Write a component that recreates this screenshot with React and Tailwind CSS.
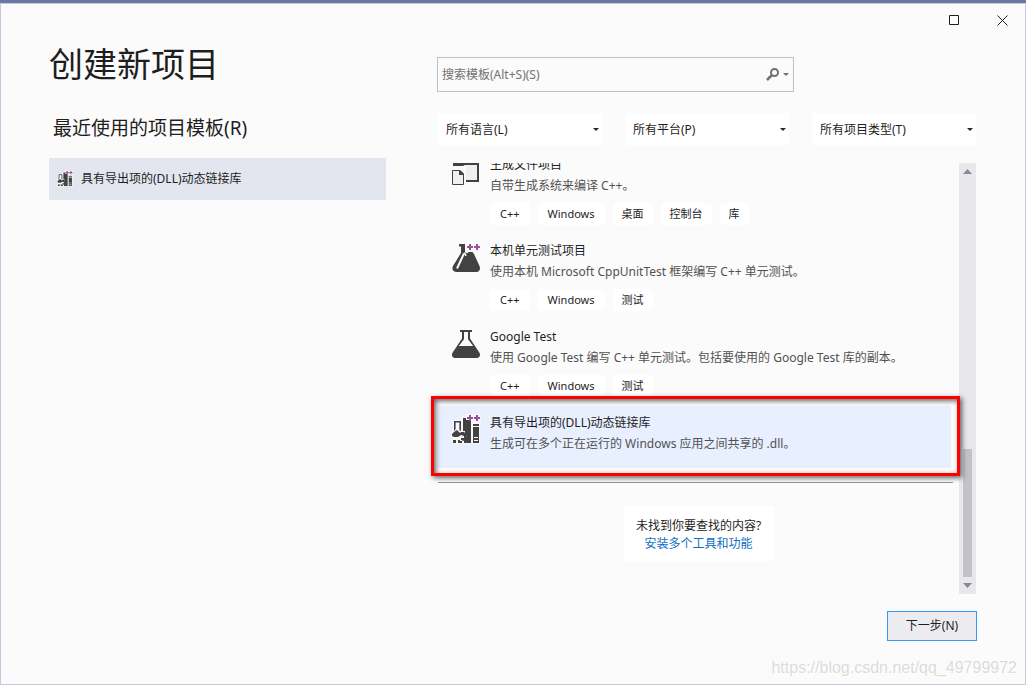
import { useState } from 'react'

const FILTERS = [
  { id: 'language', label: '所有语言(L)' },
  { id: 'platform', label: '所有平台(P)' },
  { id: 'type',     label: '所有项目类型(T)' },
]

const TEMPLATES = [
  { id: 'makefile', icon: MakefileIcon, name: '生成文件项目', desc: '自带生成系统来编译 C++。', tags: ['C++', 'Windows', '桌面', '控制台', '库'] },
  { id: 'native',   icon: NativeTestIcon, name: '本机单元测试项目', desc: '使用本机 Microsoft CppUnitTest 框架编写 C++ 单元测试。', tags: ['C++', 'Windows', '测试'] },
  { id: 'gtest',    icon: FlaskIcon, name: 'Google Test', desc: '使用 Google Test 编写 C++ 单元测试。包括要使用的 Google Test 库的副本。', tags: ['C++', 'Windows', '测试'] },
  { id: 'dll',      icon: DllIcon, name: '具有导出项的(DLL)动态链接库', desc: '生成可在多个正在运行的 Windows 应用之间共享的 .dll。', tags: [] },
]

// ── Icons ─────────────────────────────────────────────────────
function PlusPlus() {
  return <path d="M17 0h2v2h2v2h-2v2h-2V4h-2V2h2zM24 0h2v2h2v2h-2v2h-2V4h-2V2h2z" fill="#9b4f96" />
}

function MakefileIcon({ className }) {
  return (
    <svg viewBox="0 0 28 30" className={className} aria-hidden="true">
      <path d="M1 5h12l2 3h12v16H14V8H1z" fill="#f0eff1" />
      <path d="M1 4h12l2 2h12v20H14v-2h11V9H13l-2 1H1z" fill="#424242" transform="translate(0 -1)" />
      <path d="M.5 14.500h7.500l3.500 3.500v10.500h-11z" fill="#f0eff1" stroke="#424242" transform="translate(0 -1)" />
      <path d="M7 13h1l4 4v1H7z" fill="#424242" />
      <path d="M17 0h2v2h2v2h-2v1h-2V4h-2V2h2zM24 0h2v2h2v2h-2v1h-2V4h-2V2h2z" fill="#9b4f96" />
    </svg>
  )
}

function NativeTestIcon({ className }) {
  return (
    <svg viewBox="0 0 28 30" className={className} aria-hidden="true">
      <g transform="translate(0 1)">
        <path d="M7 0h6v8l2 1.500l1.500-1.500h4l1.500 2 5.500 12c1.300 3 0 6-3 6H4c-3 0-4.500-3-3-6L9 9V2.500H7z" fill="#424242" />
        <path d="M12 9.500 5 24.500" stroke="#fbfbfb" strokeWidth="2" />
        <path d="M12.500 8.500 14 12" stroke="#fbfbfb" strokeWidth="1.500" />
        <PlusPlus />
      </g>
    </svg>
  )
}

function FlaskIcon({ className }) {
  return (
    <svg viewBox="0 0 28 30" className={className} aria-hidden="true">
      <path
        d="M8 1h12v2h-2v6.500l9.300 14c1.700 3 .2 5.500-2.800 5.500h-21c-3 0-4.500-2.500-2.800-5.500L10 9.500V3H8zM12 3v7.200L6.800 17h14.400L16 10.200V3z"
        fill="#424242"
        fillRule="evenodd"
      />
    </svg>
  )
}

function DllIcon({ className }) {
  return (
    <svg viewBox="0 0 28 30" className={className} aria-hidden="true">
      <path d="M1 5h8V2h5V-1h15v8h-1v22H0V22h-1v-4l2-3z" fill="#f8f8fa" />
      <path d="M2.800 6.800h5.400v10H2.800z" fill="#f8f8fa" stroke="#424242" strokeWidth="1.600" />
      <path d="M11 3h3v2h5v23h-6V16h-2z" fill="#424242" />
      <path d="M21 9h6v19h-6z" fill="#424242" />
      <path d="M21 11h6v1h-6zM22 22h4v1h-4zM22 25h4v1h-4z" fill="#f8f8fa" />
      {/* socket and arrow */}
      <path d="M0 18l4-4 5 2 4 3 2 3v3l-2 4H7l-3-5H1l-1-2z" fill="#f8f8fa" />
      <path d="M0 19l2-2 3-2 3 3 1-1h3l2 2v2l2 1v3l-2 2v1h-2v-2l-3-1v-2h3v-2l-3-1-3 2H2l-2-1zM1 25h3v3H1zM6 25h2v1h2v2H6z" fill="#424242" />
      <PlusPlus />
    </svg>
  )
}

function Caret({ className }) {
  return (
    <svg viewBox="0 0 6 3" className={className} aria-hidden="true">
      <path d="M0 0h6L3 3z" fill="currentColor" />
    </svg>
  )
}

function Filter({ id, label }) {
  return (
    <div className="relative w-[164px]">
      <select id={id} aria-label={label} className="h-8 w-full appearance-none bg-white pl-2 pr-5 pt-0.5 text-xs text-[#1e1e1e] outline-none">
        <option>{label}</option>
      </select>
      <Caret className="pointer-events-none absolute right-[3px] top-[15px] h-[3px] w-[6px] text-[#1b293e]" />
    </div>
  )
}

function Tag({ text }) {
  // latin tags are a little wider than the chinese ones
  const latin = /^[A-Z]/.test(text)
  return (
    <span className={`rounded bg-white text-[11px] leading-[22px] text-[#1e1e1e] ${latin ? 'px-[10px]' : 'px-[9px]'}`}>
      {text}
    </span>
  )
}

function Template({ item, selected, onSelect }) {
  const Icon = item.icon
  return (
    <li
      onClick={onSelect}
      className={`relative mr-2 flex min-h-[62px] gap-[10px] pl-[14px] pt-[7px] ${selected ? 'bg-[#e8efff]' : ''}`}
    >
      <Icon className="mt-0.5 h-[30px] w-7 shrink-0 overflow-visible" />
      <div className="whitespace-nowrap">
        <h3 className="text-xs leading-5 text-[#1e1e1e]">{item.name}</h3>
        <p className="text-xs leading-[22px] text-[#525252]">{item.desc}</p>
        {item.tags.length > 0 && (
          <div className="mb-[9px] mt-[6px] flex gap-2">
            {item.tags.map(tag => <Tag key={tag} text={tag} />)}
          </div>
        )}
      </div>
      {selected && (
        <div className="pointer-events-none absolute -bottom-2 -left-[7px] -right-[9px] -top-[10px] z-10 border-3 border-[#fe0000] shadow-[2px_2px_5px_rgba(0,0,0,0.6),inset_2px_2px_5px_rgba(0,0,0,0.6)]" />
      )}
    </li>
  )
}

function ScrollBar() {
  return (
    <div className="flex w-[17px] shrink-0 flex-col items-center bg-[#e8e8ec] text-[#868999]">
      <svg viewBox="0 0 17 17" className="h-[17px] w-[17px]" aria-hidden="true">
        <path d="M4 11h9L8.500 6z" fill="currentColor" />
      </svg>
      <div className="mt-auto h-32 w-[9px] bg-[#c2c3c9]" />
      <svg viewBox="0 0 17 17" className="h-[17px] w-[17px]" aria-hidden="true">
        <path d="M4 6h9l-4.500 5z" fill="currentColor" />
      </svg>
    </div>
  )
}

export default function App() {
  const [query,    setQuery]    = useState('')
  const [selected, setSelected] = useState('dll')

  return (
    <div className="relative flex h-screen flex-col border-x border-b border-[#c8c8dc] bg-[#fbfbfb] font-['Noto_Sans','Noto_Sans_CJK_SC',sans-serif] text-[#1e1e1e]">
      <div className="-mx-px h-1 shrink-0 border-b border-[#c3cbe0] bg-[#6c77a6]" />

      {/* Window buttons */}
      <div className="-mr-px flex h-8 shrink-0 items-center justify-end">
        <button aria-label="最大化" className="flex h-8 w-12 items-center justify-center">
          <svg viewBox="0 0 10 10" className="h-[10px] w-[10px]"><path d="M.5.500h9v9h-9z" fill="none" stroke="#1e1e1e" /></svg>
        </button>
        <button aria-label="关闭" className="flex h-8 w-12 items-center justify-center">
          <svg viewBox="0 0 11 11" className="h-[11px] w-[11px]"><path d="M.5.500l10 10M10.500.500l-10 10" stroke="#1e1e1e" /></svg>
        </button>
      </div>

      <main className="flex min-h-0 flex-1 gap-[51px] px-12 pb-[43px]">
        {/* Recent templates */}
        <section className="w-[337px] shrink-0 pt-2">
          <h1 className="text-[34px] leading-10">创建新项目</h1>
          <h2 className="mt-[30px] pl-1 text-[19px] leading-7">最近使用的项目模板(R)</h2>
          <button className="mt-4 flex h-[42px] w-full items-center gap-2 bg-[#e3e6ee] pl-2 text-left text-xs">
            <DllIcon className="h-4 w-4" />
            具有导出项的(DLL)动态链接库
          </button>
        </section>

        {/* Search, filters and the template list */}
        <section className="flex min-w-0 flex-1 flex-col pt-[21px]">
          <div className="flex h-[35px] w-[357px] shrink-0 items-center border border-[#b8c4cc] px-1 text-[#717171]">
            <input
              type="text"
              aria-label="搜索模板"
              placeholder="搜索模板(Alt+S)(S)"
              className="min-w-0 flex-1 bg-transparent text-xs outline-none placeholder:text-[#717171]"
              value={query}
              onChange={e => setQuery(e.target.value)}
            />
            <svg viewBox="0 0 13 13" className="mr-1 h-[13px] w-[13px]" aria-hidden="true">
              <circle cx="8.500" cy="4.500" r="3.500" fill="none" stroke="currentColor" strokeWidth="2" />
              <path d="M6 7l-5 5" stroke="currentColor" strokeWidth="2.500" />
            </svg>
            <Caret className="h-[3px] w-[6px]" />
          </div>

          <div className="mx-px mt-[21px] flex shrink-0 justify-between">
            {FILTERS.map(f => <Filter key={f.id} {...f} />)}
          </div>

          <div className="mx-px mt-[18px] flex min-h-0 flex-1">
            <div className="min-w-0 flex-1 overflow-y-clip">
              <ul className="-mt-[15px]">
                {TEMPLATES.map(t => (
                  <Template key={t.id} item={t} selected={t.id === selected} onSelect={() => setSelected(t.id)} />
                ))}
              </ul>
              <hr className="mr-[6px] mt-[14px] border-[#999999]" />
              <div className="mx-auto mt-[23px] w-[150px] bg-white pb-2 pt-[11px] text-center text-xs leading-[18px]">
                <p>未找到你要查找的内容?</p>
                <a href="#install" className="text-[#0e70c0]">安装多个工具和功能</a>
              </div>
            </div>
            <ScrollBar />
          </div>

          <button className="mt-[17px] h-[30px] w-[90px] shrink-0 self-end border border-[#3399ff] bg-[#ececf0] text-xs">
            下一步(N)
          </button>
        </section>
      </main>

      <p className="absolute bottom-1.5 right-2 font-['Liberation_Sans',sans-serif] text-base leading-5 text-[#dcdcdc] [text-shadow:1px_1px_0_#ffffff]">
        https://blog.csdn.net/qq_49799972
      </p>
    </div>
  )
}
